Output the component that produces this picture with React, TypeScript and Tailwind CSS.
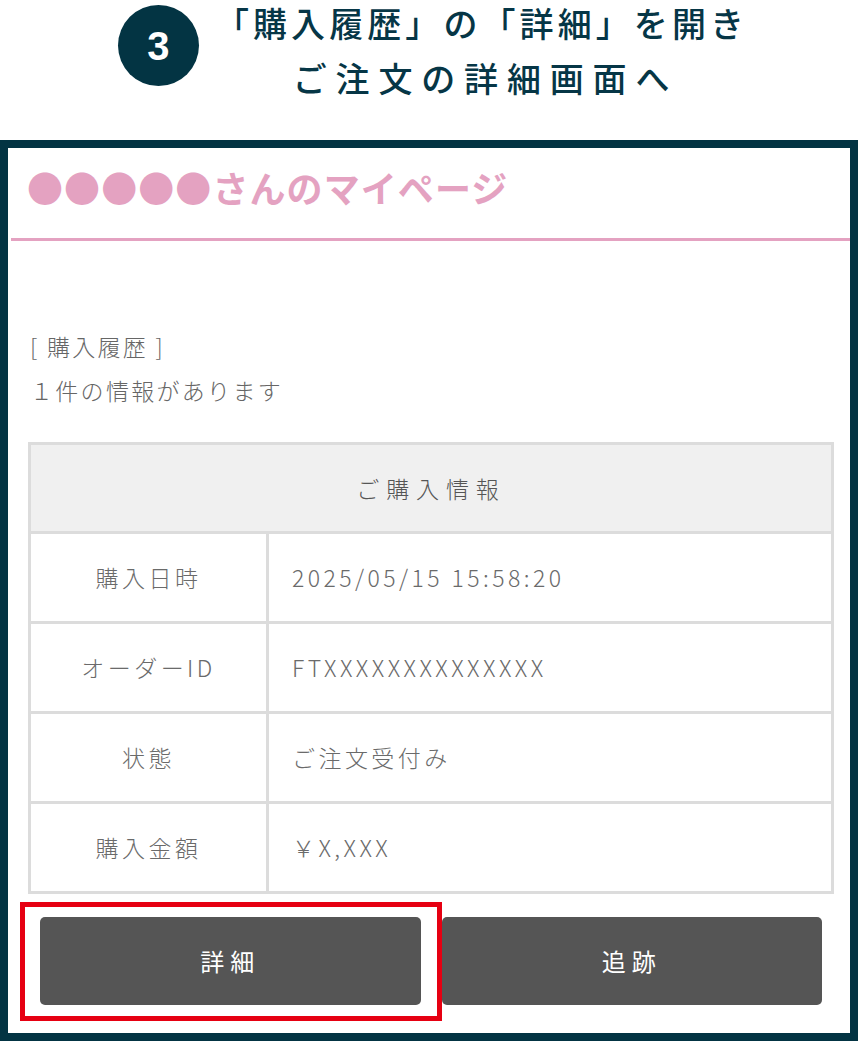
const rows = [
  { label: "購入日時", value: "2025/05/15 15:58:20" },
  { label: "オーダーID", value: "FTXXXXXXXXXXXXXX" },
  { label: "状態", value: "ご注文受付み" },
  { label: "購入金額", value: "￥X,XXX" },
];

const jp = "font-['Noto_Sans_CJK_JP','Noto_Sans',sans-serif]";

const App = () => {
  return (
    <div className={`w-[858px] bg-white ${jp}`}>
      {/* step heading */}
      <div className="h-[140px] flex justify-center items-start gap-4 pl-[8px]">
        <div className="mt-[5px] w-[81px] h-[81px] rounded-full bg-[#033443] flex items-center justify-center shrink-0">
          <span className="text-white text-[40px] font-bold font-['Liberation_Sans',sans-serif] leading-none">3</span>
        </div>
        <div className="text-center text-[#063646] text-[34px] leading-[46px] font-medium">
          <p className="tracking-[0.12em]">「購入履歴」の「詳細」を開き</p>
          <p className="mt-[9px] tracking-[0.26em] pl-[8px]">ご注文の詳細画面へ</p>
        </div>
      </div>

      {/* phone screen */}
      <div className="border-[8px] border-[#033443]">
        <div className="h-[90px] pl-[19px] pt-[19px] text-[36px] leading-[40px] font-bold text-[#e4a2c1] tracking-[0.03em]">
          ●●●●●さんのマイページ
        </div>
        <div className="ml-[3px] h-[3px] bg-[#e4a2c1]"></div>

        <div className="pl-[20px] pr-[16px] pb-[28px]">
          <div className="mt-[83px] pl-[2px] text-[23px] leading-[44px] text-[#666] font-light tracking-[0.1em]">
            <p>[ 購入履歴 ]</p>
            <p>１件の情報があります</p>
          </div>

          <div className="mt-[30px] border-[3px] border-[#dcdcdc] text-[#6a6a6a] text-[23px] font-light tracking-[0.15em]">
            <div className="h-[86px] bg-[#f0f0f0] flex items-center justify-center tracking-[0.3em] text-[#555]">
              ご購入情報
            </div>
            {rows.map((r) => (
              <div key={r.label} className="grid grid-cols-[235px_1fr] border-t-[3px] border-[#dcdcdc] h-[90px]">
                <div className="flex items-center justify-center">{r.label}</div>
                <div className="border-l-[3px] border-[#dcdcdc] flex items-center pl-[23px]">{r.value}</div>
              </div>
            ))}
          </div>

          <div className="mt-[23px] px-[12px] grid grid-cols-2 gap-[21px]">
            <div className="relative">
              <div className="absolute -left-[20px] -right-[21px] -top-[15px] -bottom-[16px] border-[5px] border-[#e60012]"></div>
              <button className="relative w-full h-[88px] rounded-[5px] bg-[#555555] text-white text-[24px] tracking-[0.25em]">
                詳細
              </button>
            </div>
            <button className="w-full h-[88px] rounded-[5px] bg-[#555555] text-white text-[24px] tracking-[0.25em]">
              追跡
            </button>
          </div>
        </div>
      </div>
    </div>
  );
};

export default App;
